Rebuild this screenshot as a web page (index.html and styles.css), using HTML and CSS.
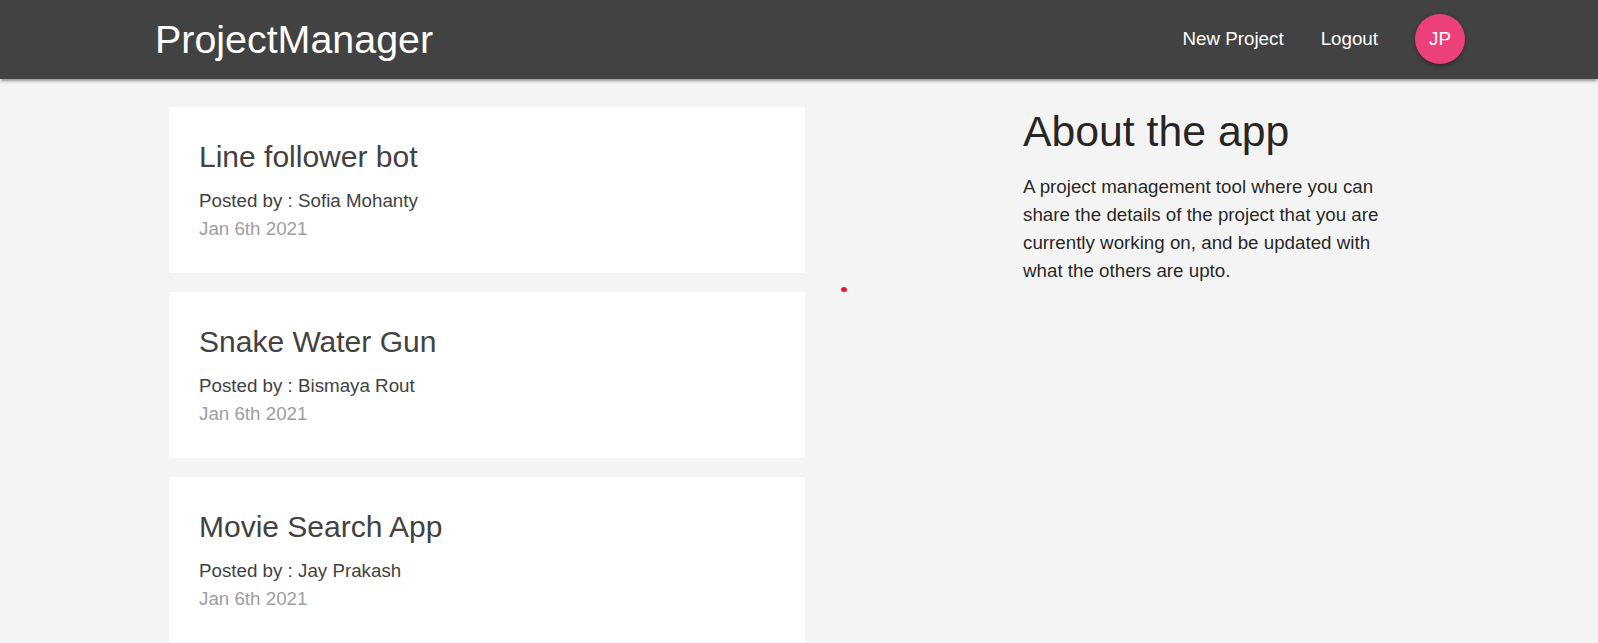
FILE: index.html
```html
<!DOCTYPE html>
<html lang="en">
<head>
<meta charset="utf-8">
<title>ProjectManager</title>
<link rel="stylesheet" href="styles.css">
</head>
<body>
<nav class="navbar">
  <a class="brand">ProjectManager</a>
  <div class="links"><a class="link">New Project</a><a class="link">Logout</a><a class="avatar">JP</a></div>
</nav>
<main class="dashboard">
  <section class="projects">
    <article class="card"><h2 class="title">Line follower bot</h2><p class="author">Posted by : Sofia Mohanty</p><p class="date">Jan 6th 2021</p></article>
    <article class="card"><h2 class="title">Snake Water Gun</h2><p class="author">Posted by : Bismaya Rout</p><p class="date">Jan 6th 2021</p></article>
    <article class="card"><h2 class="title">Movie Search App</h2><p class="author">Posted by : Jay Prakash</p><p class="date">Jan 6th 2021</p></article>
  </section>
  <aside class="about">
    <h1 class="heading">About the app</h1>
    <p class="text">A project management tool where you can<br>share the details of the project that you are<br>currently working on, and be updated with<br>what the others are upto.</p>
  </aside>
</main>
<span class="dot"></span>
</body>
</html>
```
FILE: styles.css
```css
* { box-sizing: border-box; }
body { margin: 0; height: 643px; overflow: hidden; background: #f4f4f4; font-family: "Liberation Sans", Arial, sans-serif; font-size: 18.75px; line-height: 28px; color: rgba(0,0,0,.87); }
h1, h2, p { margin: 0; font-weight: 400; }
.navbar { height: 79px; padding: 0 133px 0 155px; display: flex; justify-content: space-between; align-items: flex-start; background: #424242; color: #fff; box-shadow: 0 2px 3px rgba(0,0,0,.14), 0 4px 1px -2px rgba(0,0,0,.12), 0 1px 6px rgba(0,0,0,.2); }
.brand { font-size: 39.4px; line-height: 79px; }
.links { display: flex; align-items: center; height: 78px; }
.link { margin-right: 37px; }
.avatar { width: 50px; height: 50px; border-radius: 50%; background: #ec407a; text-align: center; line-height: 50px; box-shadow: 0 2px 3px rgba(0,0,0,.14), 0 4px 1px -2px rgba(0,0,0,.12), 0 1px 6px rgba(0,0,0,.2); }
.dashboard { display: flex; padding: 28px 0 0 169px; }
.projects { width: 636px; margin-right: 218px; display: flex; flex-direction: column; gap: 19px; }
.card { height: 166px; padding: 30px; background: #fff; color: #424242; border-radius: 2px; }
.title { font-size: 30px; line-height: 40px; margin-bottom: 10px; }
.date { color: #9e9e9e; }
.heading { font-size: 42.75px; line-height: 48px; margin-bottom: 18px; }
.dot { position: absolute; left: 841px; top: 287px; width: 6px; height: 5px; border-radius: 50%; background: #ed1c24; }
```
